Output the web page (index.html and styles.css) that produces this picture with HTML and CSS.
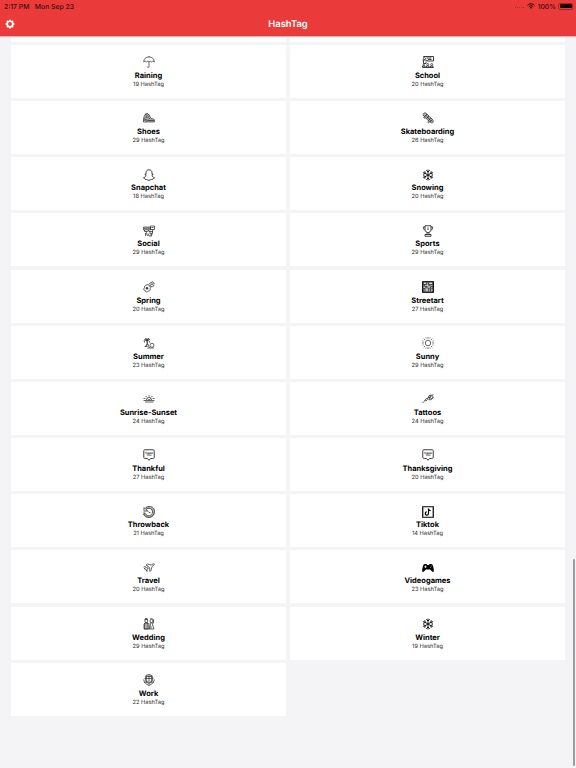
FILE: index.html
```html
<!DOCTYPE html>
<html lang="en">
<head>
  <meta charset="utf-8" />
  <title>HashTag</title>
  <link rel="stylesheet" href="styles.css">
</head>
<body>
  <!-- icons -->
  <svg class="sprite">
    <symbol id="umbrella" viewBox="0 0 24 24"><path class="mid" d="M12 0v2M1.500 12C1.500 5 6 2 12 2s10.500 3 10.500 10c-2-2-4-2-5.500 0M1.500 12c2-2 4-2 5.500 0M7 12c1.500-2 3.500-2 5 0 1.500-2 3.500-2 5 0M12 12v9c0 2.500-3.500 2.500-3.500 0"/></symbol>
    <symbol id="school" viewBox="0 0 24 24"><path class="bold" d="M3 1h20v9H11M3 1v2M9 4h10M12 7h7M1 8h7l4 2M3 8v7h5v-4M1 23v-3h5v3M9 23v-3h5v3M17 23v-3h5v3M1 23h22"/><circle class="mid" cx="5" cy="5" r="2"/><circle class="mid" cx="3.500" cy="18" r="1.500"/><circle class="mid" cx="11.500" cy="17" r="2"/><circle class="mid" cx="19.500" cy="17" r="2"/></symbol>
    <symbol id="shoe" viewBox="0 0 24 24"><path class="gray" d="M2 9l3-5 3 2 4-1 4 8 5 1c2 1 3 3 2 6H10L1 16z"/><path class="mid" d="M1 13l9 4h12M8 7l-2 5M9 11l3-2M11 14l3-2M4 5l4-3 3 3M1 16v4h7"/></symbol>
    <symbol id="skateboard" viewBox="0 0 24 24"><path class="gray" d="M3 3c2-2 4-2 6 0l12 12c2 2 2 4 1 6-2 1-4 1-6-1L3 8C2 6 2 4 3 3z"/><path class="mid" d="M5 9l5-5M9 13l5-5M13 17l5-5M16 20l5-5M7 6l11 12"/><circle cx="5" cy="11" r="1.500"/><circle cx="13" cy="20" r="1.500"/></symbol>
    <symbol id="snapchat" viewBox="0 0 24 24"><path class="bold" d="M12 1.500c4 0 6 3 6 6v3l2-.5c1 1-1 2-2 2.500 0 2 2 4 5 5 0 1-2 1.500-3 1.500l-1 2c-3-.5-4 1.500-7 1.500S8 20.500 5 21l-1-2c-1 0-3-.5-3-1.500 3-1 5-3 5-5C5 12 3 11 4 10l2 .5v-3c0-3 2-6 6-6z"/></symbol>
    <symbol id="snow" viewBox="0 0 24 24"><path class="flake" d="M12 1v22M2.500 6.500l19 11M21.500 6.500l-19 11M8.500 2.500L12 6l3.500-3.500M8.500 21.500L12 18l3.500 3.500M2 10.500l4.700-1.300L5.500 4.500M22 13.500l-4.700 1.300 1.200 4.700M22 10.500l-4.700-1.300 1.200-4.700M2 13.500l4.700 1.300-1.200 4.700"/></symbol>
    <symbol id="social" viewBox="0 0 24 24"><path class="gray" d="M1 4h14v6H1z"/><path class="mid" d="M15 2h8v7h-8zM3 10v3h6l3-3M6 13l3 9M5 16v6M11 13h8l-2 9h-5l-2-5M14 13v5l3-1M19 9v6l-4 7M3 7h2M7 7h2M11 7h2M17 5h4"/></symbol>
    <symbol id="trophy" viewBox="0 0 24 24"><path class="bold" d="M6 1.500h12V9c0 4-3 6-6 6s-6-2-6-6zM6 4H2.500c0 4 2 6 4 7M18 4h3.500c0 4-2 6-4 7M10 15v4M14 15v4M6 19h12v3.500H6zM12 5v5"/></symbol>
    <symbol id="flowers" viewBox="0 0 24 24"><path class="mid" d="M8 8c3-2 5 0 4.500 2.500 3 0 4 3 1.500 5 1 3-1 5.500-4 4.500-2 3-5.500 2-5.500-1-3 0-4.500-3-1.500-5-1-3 1.500-6 5-6zM17 2c2-2 4 0 3 2 3 0 4 2 1 4 1 2-1 4-3 3-2 1-4-1-3-3-3-2-2-5 1-4z"/><circle class="fill" cx="8" cy="14.500" r="2"/><circle cx="18" cy="6.500" r="1.500"/></symbol>
    <symbol id="streetart" viewBox="0 0 24 24"><path class="gray" d="M1.500 1.500h21v21h-21z"/><path class="heavy" d="M1.500 1.500h21v21h-21z"/><path class="mid" d="M3 7h6V3M13 3v4h8M5 7v4h5l3-4 5 4h4M3 15h3l3-3 4 4 4-4v4h5M6 15v6M14 16l-2 5M17 16v5"/><path class="white" d="M4 4.500h3M10 9h2M15 4.500h5M3 12.500h2M8 18h3M19 18h2M14 13h1"/></symbol>
    <symbol id="summer" viewBox="0 0 24 24"><path class="bold" d="M8 7C5 3 3 4 2 7M8 7c3-4 5-4 6-1M8 7c-4-1-6 1-5 4M8 7c4 0 6 1 5 4M8 7L6 2M8 7l3-5"/><path class="mid" d="M8 7c1 5 0 8-3 12M8 8l1 5-2 6M3 19h6M9 22h13M9 13l4 9"/><circle class="mid" cx="18" cy="16.500" r="4"/></symbol>
    <symbol id="sun" viewBox="0 0 24 24"><circle class="mid" cx="12" cy="12" r="5.500"/><path class="mid" d="M12 0v3.500M12 20.500V24M0 12h3.500M20.500 12H24M3.500 3.500L6 6M18 18l2.500 2.500M20.500 3.500L18 6M6 18l-2.500 2.500M7.500 1l.8 2M15.700 21l.8 2M16.500 1l-.8 2M8.300 21l-.8 2M1 7.500l2 .8M21 15.700l2 .8M1 16.500l2-.8M21 8.300l2-.8"/></symbol>
    <symbol id="sunrise" viewBox="0 0 24 24"><path class="mid" d="M1 15h22M4 18h17M7 14c0-7 10-7 10 0M12 4v3M5 6l3 3M19 6l-3 3M1 11h4M19 11h4M9 12l3 2 4-3"/></symbol>
    <symbol id="tattoo" viewBox="0 0 24 24"><path class="mid" d="M1 20l5-5M5 15l4-4 2 2-3 3zM9 12l5-4M14 5l4-1 3 1 1 4-3 4-4 1-3-3zM17 4l-2 9M20 5l-6 5M21 4l2-2M20 10l3-1M14 8l6 4"/></symbol>
    <symbol id="bubble" viewBox="0 0 24 24"><path class="bold" d="M4 1.500h16c2 0 2.500 1 2.500 3V16c0 2-1 3-3 3H15l-3 3.500L9 19H4.500c-2 0-3-1-3-3V4.500c0-2 .5-3 2.500-3z"/></symbol>
    <symbol id="throwback" viewBox="0 0 24 24"><path class="gray-ring" d="M5 6a9.500 9.500 0 1 1-2.500 5"/><path class="mid" d="M2 3v7h7L6 7c5-5 13-2 13 5 0 8-11 10-14.500 3L1 16c5 11 22 8 22-5C23-1 9-2 4 5z"/><path class="mid" d="M8 9l4 4h3"/></symbol>
    <symbol id="tiktok" viewBox="0 0 24 24"><path class="heavy" d="M1.500 1.500h21v21h-21z"/><path class="heavy" d="M13 5v10a3.300 3.300 0 1 1-3.300-3.300M13 5c.3 3 2 4.300 4.500 4.500"/></symbol>
    <symbol id="plane" viewBox="0 0 24 24"><path class="mid" d="M1 10l3-1 3 2 4-2-5-3 3-2 7 2 4-2c2-1 4 0 2 2l-4 3-2 8-2 2-1-8-5 3v5l-2-4-4-2 3-1"/></symbol>
    <symbol id="gamepad" viewBox="0 0 24 24"><path class="solid" d="M6 4h3l1 2h4l1-2h3c3 0 4 3 5 8 1 4 1 8-1 8-3 0-4-5-6-5H8c-2 0-3 5-6 5-2 0-2-4-1-8 1-5 2-8 5-8z"/><path class="white" d="M7 7v5M4.500 9.500h5M16 11h1M18 8h1"/></symbol>
    <symbol id="wedding" viewBox="0 0 24 24"><path class="gray" d="M3 11h7v11H3z"/><circle class="mid" cx="6.500" cy="6" r="3"/><circle class="mid" cx="17" cy="6" r="3"/><path class="mid" d="M3 3h7M4 1h5M2 22V12l3-3h4l3 4v9M2 22h20M14 2l3-1 4 2v7M14 10h6l-1 4 3 8M14 10l1 4-3 8M16 16v6"/></symbol>
    <symbol id="work" viewBox="0 0 24 24"><circle class="mid" cx="12" cy="9" r="8"/><path class="mid" d="M4 9h16M6 5h12M12 1v15M8 3c-2 4-2 8 0 12M16 3c2 4 2 8 0 12M1 11l2 5 6 1 3 4 3-4 6-1 2-5M2 16l6 5 4 2 4-2 6-5"/></symbol>
    <symbol id="gear" viewBox="0 0 24 24"><path class="teeth" d="M12 1.500v4M12 18.500v4M1.500 12h4M18.500 12h4M4.600 4.600l2.800 2.800M16.600 16.600l2.800 2.800M4.600 19.400l2.800-2.800M16.600 7.400l2.800-2.800"/><circle class="wheel" cx="12" cy="12" r="6.700"/></symbol>
  </svg>

  <header>
    <div class="status">
      <span>2:17 PM</span>
      <span class="date">Mon Sep 23</span>
      <span class="dots"></span>
      <svg class="wifi" viewBox="0 0 16 12"><path d="M1 4.500c4-4 10-4 14 0M3.500 7.200c3-2.600 6-2.600 9 0"/><path class="tip" d="M5.500 9c1.500-1.300 3.500-1.300 5 0L8 11.700z"/></svg>
      <span class="percent">100%</span>
      <span class="battery"><i></i></span>
    </div>
    <div class="navbar">
      <svg class="gear"><use href="#gear"/></svg>
      <h1>HashTag</h1>
    </div>
  </header>

  <main>
    <div class="grid">
      <div class="card cut"></div>
      <div class="card cut"></div>
      <div class="card"><svg><use href="#umbrella"/></svg><h2>Raining</h2><p>19 HashTag</p></div>
      <div class="card"><svg><use href="#school"/></svg><h2>School</h2><p>20 HashTag</p></div>
      <div class="card"><svg><use href="#shoe"/></svg><h2>Shoes</h2><p>29 HashTag</p></div>
      <div class="card"><svg><use href="#skateboard"/></svg><h2>Skateboarding</h2><p>26 HashTag</p></div>
      <div class="card"><svg><use href="#snapchat"/></svg><h2>Snapchat</h2><p>18 HashTag</p></div>
      <div class="card"><svg><use href="#snow"/></svg><h2>Snowing</h2><p>20 HashTag</p></div>
      <div class="card"><svg><use href="#social"/></svg><h2>Social</h2><p>29 HashTag</p></div>
      <div class="card"><svg><use href="#trophy"/></svg><h2>Sports</h2><p>29 HashTag</p></div>
      <div class="card"><svg><use href="#flowers"/></svg><h2>Spring</h2><p>20 HashTag</p></div>
      <div class="card"><svg><use href="#streetart"/></svg><h2>Streetart</h2><p>27 HashTag</p></div>
      <div class="card"><svg><use href="#summer"/></svg><h2>Summer</h2><p>23 HashTag</p></div>
      <div class="card"><svg><use href="#sun"/></svg><h2>Sunny</h2><p>29 HashTag</p></div>
      <div class="card"><svg><use href="#sunrise"/></svg><h2>Sunrise-Sunset</h2><p>24 HashTag</p></div>
      <div class="card"><svg><use href="#tattoo"/></svg><h2>Tattoos</h2><p>24 HashTag</p></div>
      <div class="card"><svg viewBox="0 0 24 24"><use href="#bubble"/><text x="12" y="9.500">THANK</text><text x="12" y="14.500">YOU</text></svg><h2>Thankful</h2><p>27 HashTag</p></div>
      <div class="card"><svg viewBox="0 0 24 24"><use href="#bubble"/><text x="12" y="9.500">THANK</text><text x="12" y="14.500">YOU</text></svg><h2>Thanksgiving</h2><p>20 HashTag</p></div>
      <div class="card"><svg><use href="#throwback"/></svg><h2>Throwback</h2><p>21 HashTag</p></div>
      <div class="card"><svg><use href="#tiktok"/></svg><h2>Tiktok</h2><p>14 HashTag</p></div>
      <div class="card"><svg><use href="#plane"/></svg><h2>Travel</h2><p>20 HashTag</p></div>
      <div class="card"><svg><use href="#gamepad"/></svg><h2>Videogames</h2><p>23 HashTag</p></div>
      <div class="card"><svg><use href="#wedding"/></svg><h2>Wedding</h2><p>29 HashTag</p></div>
      <div class="card"><svg><use href="#snow"/></svg><h2>Winter</h2><p>19 HashTag</p></div>
      <div class="card"><svg><use href="#work"/></svg><h2>Work</h2><p>22 HashTag</p></div>
    </div>
    <div class="scrollbar"></div>
  </main>
</body>
</html>
```
FILE: styles.css
```css
html, body { margin: 0; padding: 0; height: 100%; overflow: hidden; }
body { background: #f4f4f6; color: #000; font-family: Inter, "Liberation Sans", sans-serif; text-rendering: geometricPrecision; }
h1, h2, p { margin: 0; padding: 0; }
svg { display: block; fill: none; stroke: #333; stroke-width: 1.3; }
.sprite { position: absolute; width: 0; height: 0; }

header { height: 36px; background: #eb3a3a; border-bottom: 1px solid #efb0b2; box-sizing: content-box; }
.status { display: flex; align-items: center; height: 12px; padding: 0 3px 0 4px; font-size: 6.800px; font-weight: 500; color: #3a0b0b; }
.date { margin-left: 5.500px; }
.dots { margin-left: auto; width: 9px; border-bottom: 1px dotted #a82c2c; height: 3px; }
.wifi { width: 8px; height: 6px; margin: 0 2.500px 0 3px; stroke: #250505; stroke-width: 2; }
.wifi .tip { fill: #250505; stroke: none; }
.battery { display: flex; align-items: center; width: 12px; height: 4px; margin-left: 2px; padding: 0.500px; border: 0.500px solid #a02828; border-radius: 2px; }
.battery i { width: 100%; height: 4px; background: #120202; border-radius: 1px; }
.navbar { display: grid; grid-template-columns: 20px 1fr 20px; grid-template-rows: 24px; align-items: center; height: 24px; }
.gear { width: 10px; height: 10px; margin-left: 5px; }
.teeth { stroke: #fff; stroke-width: 4; }
.wheel { stroke: #fff; stroke-width: 4; }
h1 { padding-top: 1px; font-size: 9.400px; font-weight: 600; line-height: 23px; text-align: center; color: #fff; }

main { display: flex; justify-content: space-between; height: 731px; }
.grid { display: grid; grid-template-columns: 275px 275px; grid-template-rows: 4.700px; grid-auto-rows: 53px; gap: 3.180px 4px; align-content: start; margin-left: 11px; }
.card { display: flex; flex-direction: column; align-items: center; background: #fff; }
.card svg { width: 12px; height: 12px; margin: 11.300px 0 0; }
.card h2 { margin-top: 2.700px; font-size: 7.500px; font-weight: 700; line-height: 10px; }
.card p { font-size: 5.700px; line-height: 7px; color: #222; }
.scrollbar { width: 2px; height: 207px; margin: 522px 1.500px 0 0; border-radius: 1px; background: #9b9b9d; }

/* icon strokes */
.mid { stroke-width: 1.5; }
.bold { stroke-width: 1.9; }
.flake { stroke: #111; stroke-width: 1.9; }
.heavy { stroke: #000; stroke-width: 2.4; }
.gray { fill: #aaa; }
.gray-ring { stroke: #aaa; stroke-width: 4; }
.fill { fill: #333; }
.solid { fill: #000; stroke: none; }
.white { stroke: #fff; stroke-width: 1.5; }
.card text { font-size: 4.500px; font-weight: 700; text-anchor: middle; fill: #222; stroke: none; }
```
